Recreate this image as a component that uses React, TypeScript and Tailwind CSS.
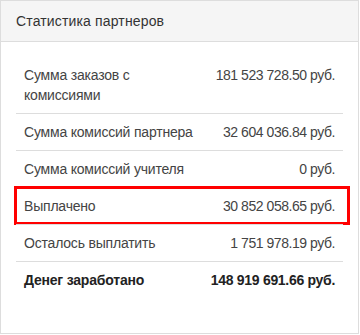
const rows = [
  { label: "Сумма заказов с комиссиями", value: "181 523 728.50 руб." },
  { label: "Сумма комиссий партнера", value: "32 604 036.84 руб." },
  { label: "Сумма комиссий учителя", value: "0 руб." },
  { label: "Выплачено", value: "30 852 058.65 руб.", marked: true },
  { label: "Осталось выплатить", value: "1 751 978.19 руб." },
  { label: "Денег заработано", value: "148 919 691.66 руб.", bold: true },
];

export default function App() {
  return (
    <div className="bg-white w-[360px] h-[335px] font-['Liberation_Sans',sans-serif]">
      <div className="flex flex-col w-[359px] h-[334px] border border-[#dddddd] bg-white">
        <div className="h-[41px] border-b border-[#dddddd] bg-[#f5f5f5] px-[15px] flex items-center text-[14px] text-[#333333] tracking-[0.15px]">
          Статистика партнеров
        </div>
        <div className="px-[15px] pt-[15px]">
          {rows.map((row, i) => (
            <div
              key={row.label}
              className={`relative grid grid-cols-[1fr_auto] text-[14px] leading-[20px] ${
                i > 0 ? "border-t border-[#dddddd]" : ""
              } ${row.bold ? "font-bold text-[#222222]" : "text-[#444444]"}`}
            >
              <div className="p-2 tracking-[-0.2px]">{row.label}</div>
              <div
                className={`p-2 text-right whitespace-nowrap ${
                  row.bold ? "tracking-[-0.3px]" : "tracking-[-0.45px]"
                }`}
              >
                {row.value}
              </div>
              {row.marked && (
                <div className="absolute top-[-2px] bottom-[-1px] left-[-2px] right-[-7px] border-[3px] border-[#ff0000]" />
              )}
            </div>
          ))}
        </div>
      </div>
    </div>
  );
}
